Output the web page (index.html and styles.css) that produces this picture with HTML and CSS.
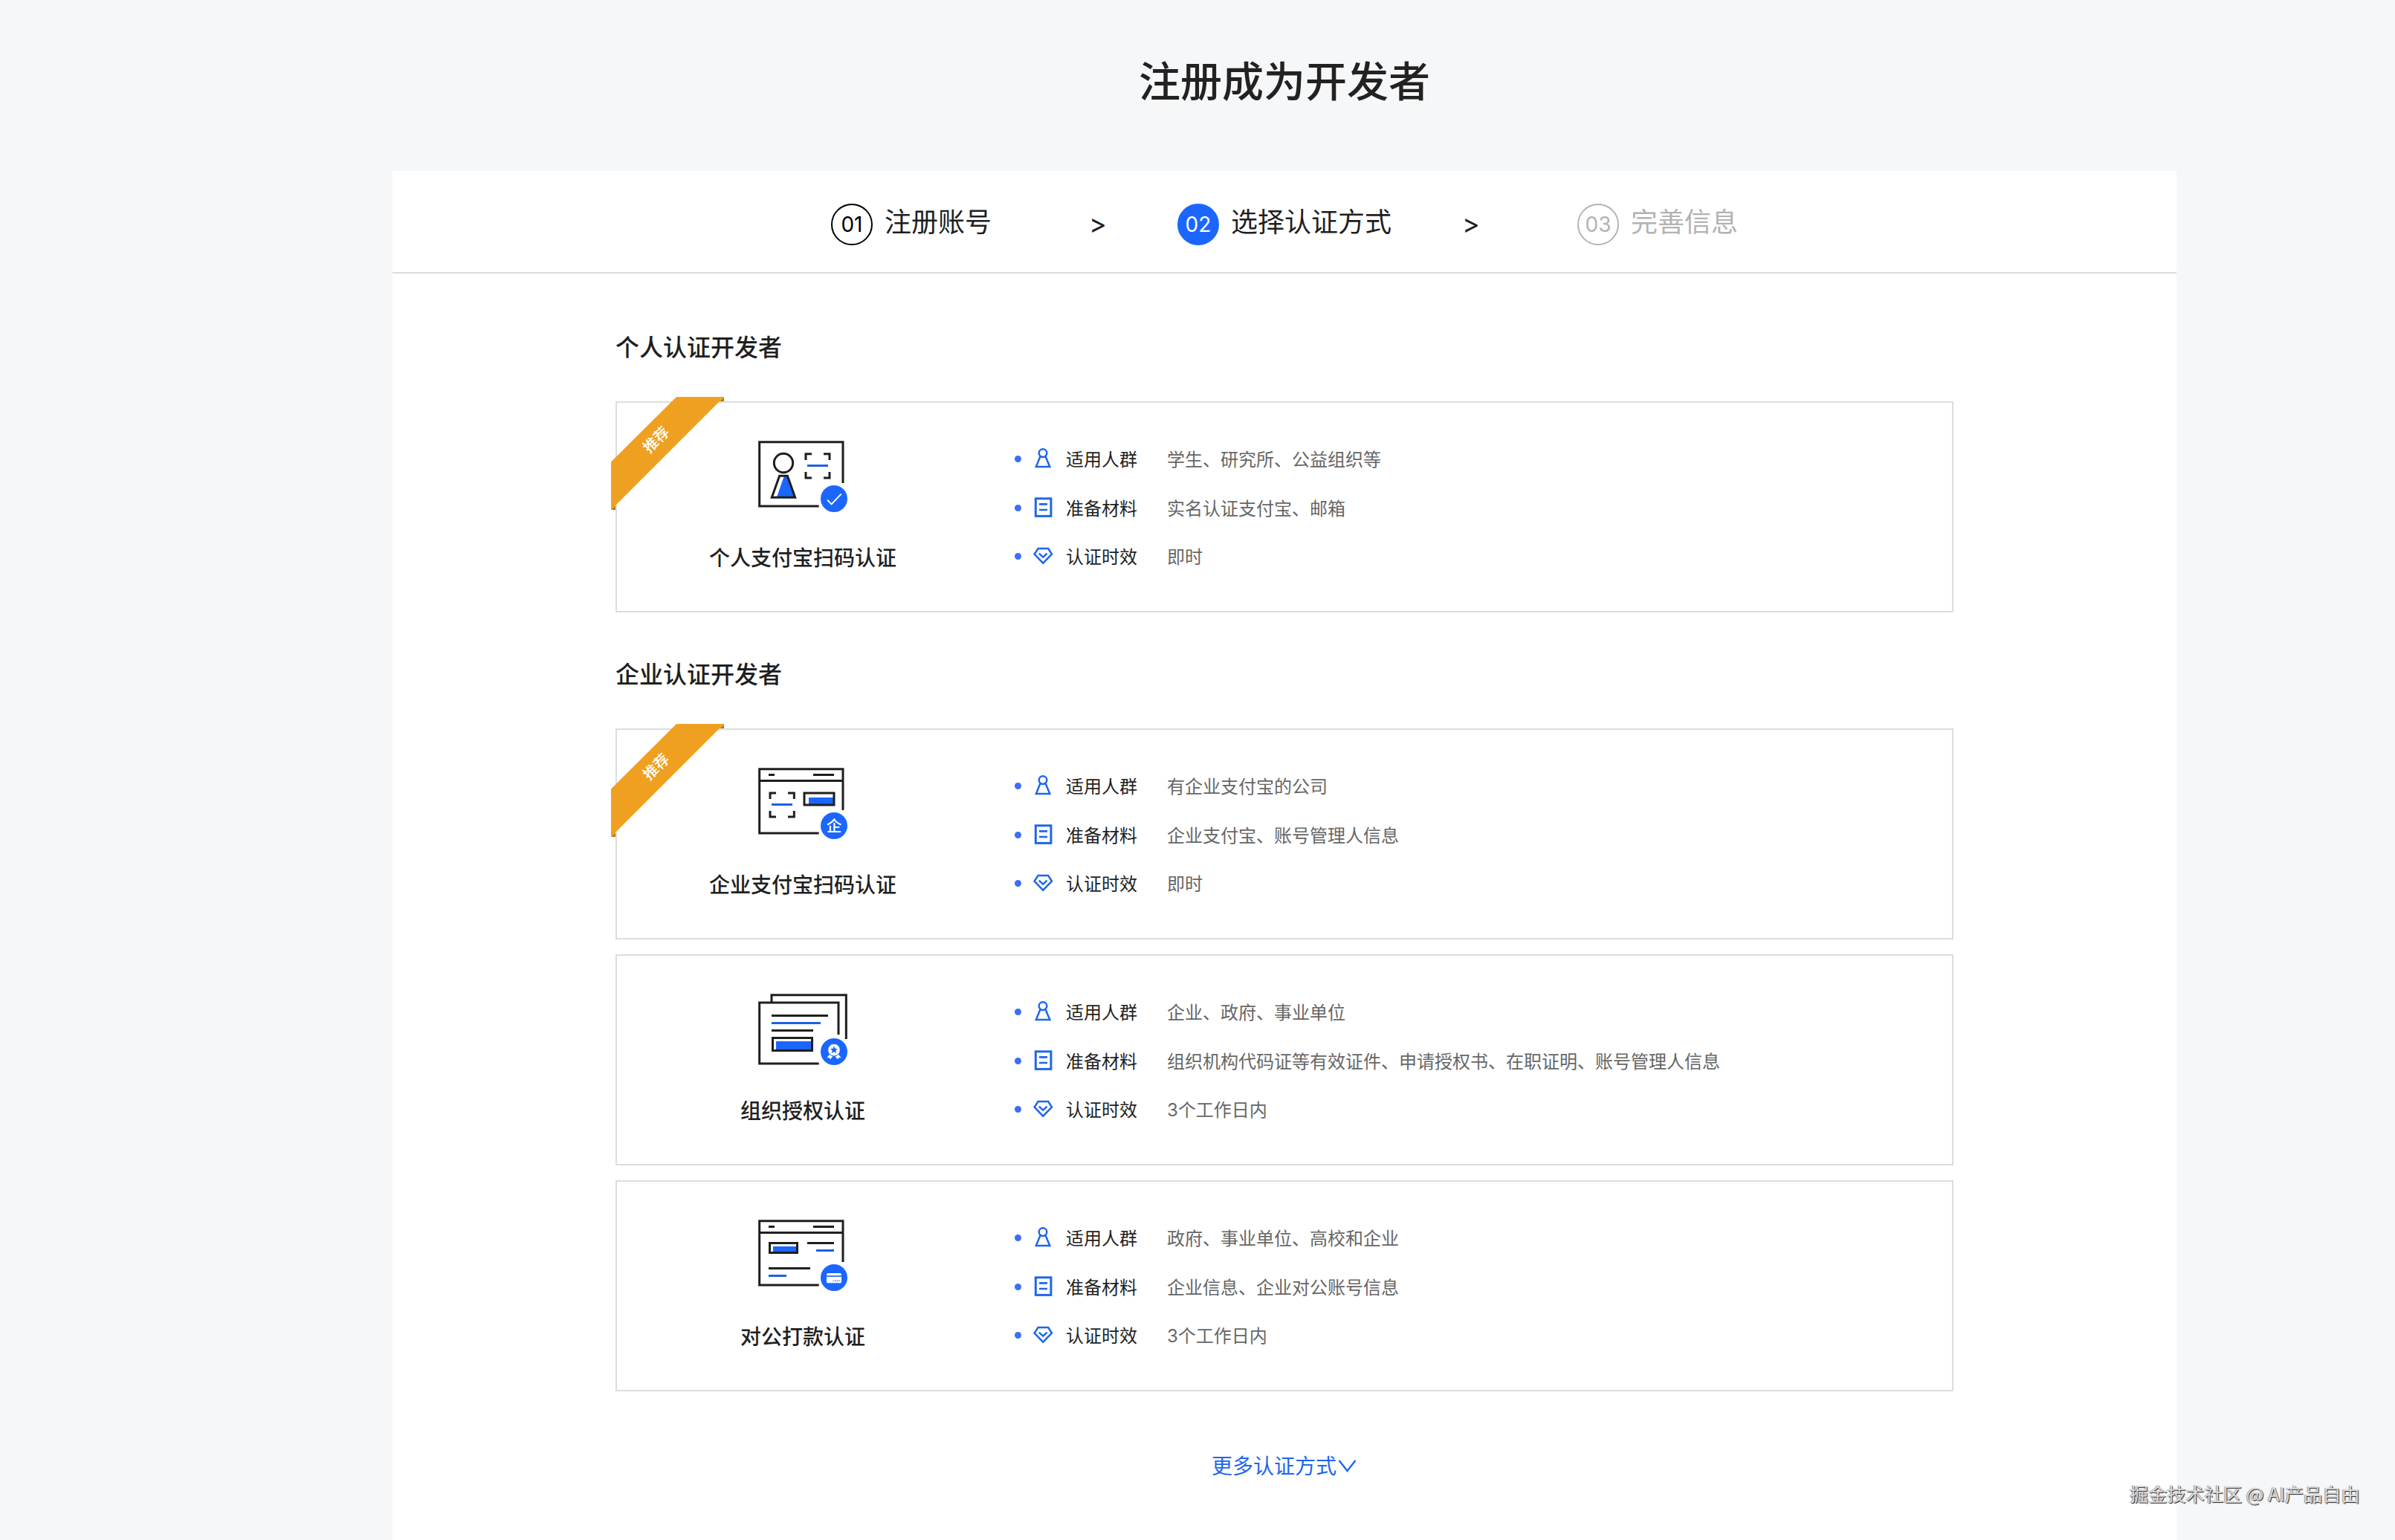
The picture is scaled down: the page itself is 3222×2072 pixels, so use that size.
FILE: index.html
```html
<!DOCTYPE html>
<html lang="zh-CN">
<head>
<meta charset="utf-8">
<title>注册成为开发者</title>
<link rel="stylesheet" href="styles.css">
</head>
<body>
<svg class="defs" width="0" height="0" aria-hidden="true">
  <symbol id="i-person" viewBox="0 0 32 32"><g fill="none" stroke="#1e66ee" stroke-width="2.5"><circle cx="16" cy="7.6" r="5.3"/><path d="M12.6 11.8 L6.9 25.9 H25.3 L19.4 11.8"/></g></symbol>
  <symbol id="i-doc" viewBox="0 0 32 32"><g fill="none" stroke="#1e66ee"><rect x="6.3" y="2.800" width="20.6" height="23.6" stroke-width="3"/><path d="M11 10.3H22M11 18H22" stroke-width="2.700"/></g></symbol>
  <symbol id="i-gem" viewBox="0 0 32 32"><g fill="none" stroke="#1e66ee" stroke-width="2.5"><path d="M9.6 5H23.2L28 12.6 16.2 24.6 4.6 12.6Z"/><path d="M10.8 11.6L16.2 16.6 21.6 11.6"/></g></symbol>
  <symbol id="i-ribbon" viewBox="0 0 152 152"><path d="M146 6h6V0zM0 152h6v-6z" fill="#b87a17"/><path d="M88 0H152L0 152V87.5z" fill="#efa020"/></symbol>
</svg>

<main class="page">
  <h1 class="page-title">注册成为开发者</h1>
  <div class="panel">
    <div class="steps">
      <div class="step"><span class="num">01</span><span class="step-text">注册账号</span></div>
      <span class="arrow arrow-a">&gt;</span>
      <div class="step active"><span class="num">02</span><span class="step-text">选择认证方式</span></div>
      <span class="arrow arrow-b">&gt;</span>
      <div class="step pending"><span class="num">03</span><span class="step-text">完善信息</span></div>
    </div>

    <div class="content">
      <section>
        <h2 class="section-title">个人认证开发者</h2>
        <div class="card">
          <div class="badge"><svg><use href="#i-ribbon"/></svg><span>推荐</span></div>
          <div class="method">
            <svg class="pic" viewBox="0 0 480 390">
              <path d="M402 240V74H65V333H305" class="ln"/>
              <circle cx="162" cy="159" r="38" class="ln"/>
              <path d="M164 213H178L209 297H135Z" fill="#1b66ff"/>
              <path d="M146 211H178L209 298H115Z" class="ln"/>
              <path d="M252 147V122H276M324 122H348V147M348 195V219H324M276 219H252V195" class="ln"/>
              <path d="M258 169.500H342" class="bl"/>
              <circle cx="366" cy="303" r="54" fill="#1b66ff"/>
              <path d="M339 308L356 325 395 284" fill="none" stroke="#fff" stroke-width="6"/>
            </svg>
            <h3 class="name">个人支付宝扫码认证</h3>
          </div>
          <ul class="facts">
            <li><svg><use href="#i-person"/></svg><b>适用人群</b><span>学生、研究所、公益组织等</span></li>
            <li><svg><use href="#i-doc"/></svg><b>准备材料</b><span>实名认证支付宝、邮箱</span></li>
            <li><svg><use href="#i-gem"/></svg><b>认证时效</b><span>即时</span></li>
          </ul>
        </div>
      </section>

      <section>
        <h2 class="section-title">企业认证开发者</h2>
        <div class="card">
          <div class="badge"><svg><use href="#i-ribbon"/></svg><span>推荐</span></div>
          <div class="method">
            <svg class="pic" viewBox="0 0 480 390">
              <path d="M402 240V74H65V333H305M65 121.500H402M102 97.500H126M282 97.500H366" class="ln"/>
              <path d="M108 195V171H132M180 171H205V195M205 243V267H180M132 267H108V243" class="ln"/>
              <path d="M114 217.500H198" class="bl"/>
              <path d="M264 189H363V216H264Z" fill="#1b66ff"/>
              <path d="M246 171H366V219H246Z" class="ln"/>
              <circle cx="366" cy="303" r="54" fill="#1b66ff"/>
              <text x="366" y="326" text-anchor="middle" class="qi">企</text>
            </svg>
            <h3 class="name">企业支付宝扫码认证</h3>
          </div>
          <ul class="facts">
            <li><svg><use href="#i-person"/></svg><b>适用人群</b><span>有企业支付宝的公司</span></li>
            <li><svg><use href="#i-doc"/></svg><b>准备材料</b><span>企业支付宝、账号管理人信息</span></li>
            <li><svg><use href="#i-gem"/></svg><b>认证时效</b><span>即时</span></li>
          </ul>
        </div>

        <div class="card">
          <div class="method">
            <svg class="pic" viewBox="0 -3 480 390">
              <path d="M384 231V102H65V348H305M114 98V71H415V249" class="ln"/>
              <path d="M114 154.500H342M114 214.500H282" class="ln"/>
              <path d="M114 184.500H312" class="bl"/>
              <path d="M132 258H276V294H132Z" fill="#1b66ff"/>
              <path d="M118.500 244.500H277.500V295.500H118.500Z" class="ln"/>
              <circle cx="366" cy="300" r="54" fill="#1b66ff"/>
              <path d="M349 310L337 325 346 324 351 331 362 318ZM383 310L395 325 386 324 381 331 370 318Z" fill="#fff"/>
              <circle cx="366" cy="293" r="25" fill="#fff" stroke="#1b66ff" stroke-width="3"/>
              <path d="M366 277L370.500 287.500 381 288.500 373 295.500 375.500 306 366 300.500 356.500 306 359 295.500 351 288.500 361.500 287.500Z" fill="#1b66ff"/>
            </svg>
            <h3 class="name">组织授权认证</h3>
          </div>
          <ul class="facts">
            <li><svg><use href="#i-person"/></svg><b>适用人群</b><span>企业、政府、事业单位</span></li>
            <li><svg><use href="#i-doc"/></svg><b>准备材料</b><span>组织机构代码证等有效证件、申请授权书、在职证明、账号管理人信息</span></li>
            <li><svg><use href="#i-gem"/></svg><b>认证时效</b><span>3个工作日内</span></li>
          </ul>
        </div>

        <div class="card">
          <div class="method">
            <svg class="pic" viewBox="0 -6 480 390">
              <path d="M402 234V68H65V327H305M65 115.500H402M102 91.500H126M282 91.500H366" class="ln"/>
              <path d="M258 157.500H366M102 259.500H270" class="ln"/>
              <path d="M294 187.500H366M102 289.500H174" class="bl"/>
              <path d="M120 171H216V195H120Z" fill="#1b66ff"/>
              <path d="M106.500 157.500H217.500V196.500H106.500Z" class="ln"/>
              <circle cx="366" cy="297" r="54" fill="#1b66ff"/>
              <rect x="336" y="279" width="60" height="40" rx="5" fill="#fff"/>
              <path d="M336 291H396" stroke="#1b66ff" stroke-width="5"/>
              <path d="M362 313L366 307M370 313L374 307M377 313L381 307M384 313L389 307" stroke="#1b66ff" stroke-width="3"/>
            </svg>
            <h3 class="name">对公打款认证</h3>
          </div>
          <ul class="facts">
            <li><svg><use href="#i-person"/></svg><b>适用人群</b><span>政府、事业单位、高校和企业</span></li>
            <li><svg><use href="#i-doc"/></svg><b>准备材料</b><span>企业信息、企业对公账号信息</span></li>
            <li><svg><use href="#i-gem"/></svg><b>认证时效</b><span>3个工作日内</span></li>
          </ul>
        </div>
      </section>

      <a class="more">更多认证方式<svg viewBox="0 0 28 20"><path d="M3.500 2L14.500 16 25.500 2" fill="none" stroke="#1e66ee" stroke-width="2.400"/></svg></a>
    </div>
  </div>
</main>
<div class="watermark">掘金技术社区 @ AI产品自由</div>
</body>
</html>
```

FILE: styles.css
```css
* { box-sizing: border-box; }

body {
  margin: 0;
  background: #f5f7f9;
  color: #1f1f1f;
  font-family: "Noto Sans CJK SC", sans-serif;
  overflow: hidden;
}

h1, h2, h3, ul { margin: 0; padding: 0; }

.defs { position: absolute; }

.page {
  display: flex;
  flex-direction: column;
  width: 2400px;
  height: 2072px;
  margin-left: 528px;
  padding-top: 66px;
}

.page-title {
  margin-bottom: 84px;
  font-size: 56px;
  line-height: 80px;
  font-weight: 500;
  text-align: center;
  color: #222;
}

.panel {
  flex: 1;
  background: #fff;
}

/* progress steps */
.steps {
  display: flex;
  justify-content: center;
  align-items: center;
  height: 138px;
  padding-top: 8px;
  border-bottom: 2px solid #ddd;
}

.step {
  display: flex;
  align-items: center;
  gap: 16px;
}

.num {
  width: 56px;
  height: 56px;
  border: 2px solid #000;
  border-radius: 50%;
  color: #000;
  font: 28px/53px Inter, sans-serif;
  text-align: center;
}

.step-text {
  font-size: 36px;
  line-height: 50px;
  padding-bottom: 12px;
}

.active .num {
  background: #1b66ff;
  border-color: #1b66ff;
  color: #fff;
}

.pending { color: #b3b3b3; }
.pending .num { border-color: #b3b3b3; color: #b3b3b3; }

.arrow {
  display: flex;
  justify-content: center;
  width: 22px;
  padding-bottom: 3px;
  font: 36px/40px Inter, sans-serif;
}
.arrow-a { margin: 0 96px 0 132px; }
.arrow-b { margin: 0 132px 0 96px; }

.content {
  width: 1800px;
  margin: 0 auto;
  padding-top: 73px;
}

section + section { margin-top: 57px; }

.section-title {
  margin-bottom: 51px;
  font-size: 32px;
  line-height: 48px;
  font-weight: 500;
}

.card {
  position: relative;
  display: flex;
  height: 284px;
  border: 2px solid #ddd;
}
.card + .card { margin-top: 20px; }

/* corner ribbon */
.badge {
  position: absolute;
  left: -8px;
  top: -8px;
  width: 152px;
  height: 152px;
}
.badge svg { display: block; width: 100%; height: 100%; }
.badge span {
  position: absolute;
  left: 35px;
  top: 40px;
  width: 50px;
  font-size: 20px;
  line-height: 34px;
  font-weight: 500;
  text-align: center;
  color: #fff;
  transform: rotate(-45deg);
}

.method {
  display: flex;
  flex-direction: column;
  align-items: center;
  width: 500px;
  padding-top: 28px;
}
.pic { width: 160px; height: 130px; }
.pic .ln { fill: none; stroke: #1f1f1f; stroke-width: 9; }
.pic .bl { stroke: #1e60e6; stroke-width: 9; }
.pic .qi { fill: #fff; font-size: 62px; font-weight: 500; }

.name {
  margin-top: 29px;
  font-size: 28px;
  line-height: 40px;
  font-weight: 500;
}

.facts {
  display: flex;
  flex-direction: column;
  gap: 25.5px;
  padding: 56px 0 0 35px;
  list-style: none;
  font-family: Inter, "Noto Sans CJK SC", sans-serif;
}
.facts li {
  display: flex;
  align-items: center;
  height: 40px;
  font-size: 24px;
  line-height: 40px;
}
.facts li::before {
  content: "";
  width: 9px;
  height: 9px;
  margin: 0 13px 1px 0;
  border-radius: 50%;
  background: #3d6ef5;
}
.facts svg { width: 32px; height: 32px; margin-right: 15px; }
.facts b, .facts span { padding-top: 2px; }
.facts b { width: 136px; font-weight: 400; }
.facts span { color: #666; white-space: nowrap; }

.more {
  display: flex;
  justify-content: center;
  align-items: center;
  margin-top: 79px;
  font-size: 28px;
  line-height: 40px;
  color: #1e66ee;
}
.more svg { width: 28px; height: 20px; margin-top: 4px; }

.watermark {
  position: absolute;
  left: 2865px;
  top: 1990px;
  font-size: 25.2px;
  line-height: 38px;
  white-space: nowrap;
  color: #dcdcdc;
  text-shadow: 1px 1px 1px #222, -1px 0 1px #999;
}
```
